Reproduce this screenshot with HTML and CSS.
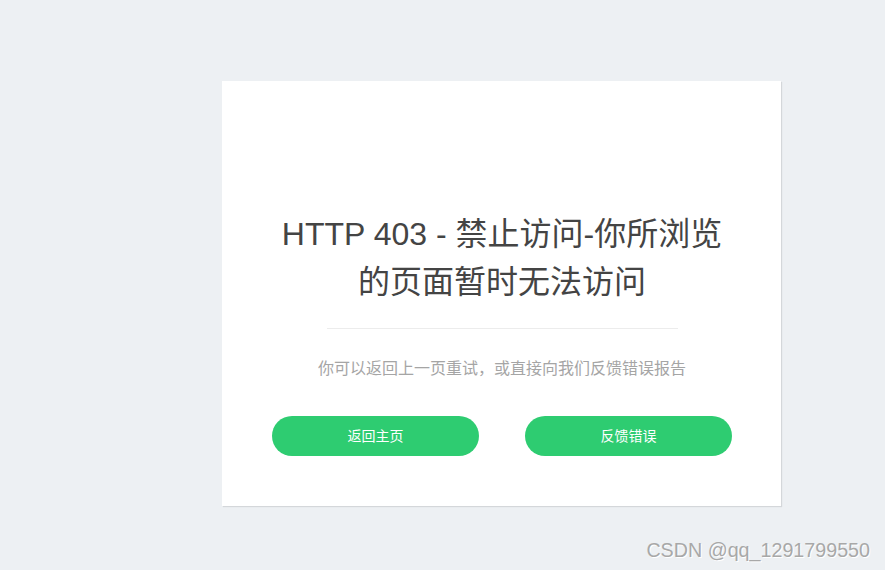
FILE: index.html
```html
<!DOCTYPE html>
<html lang="zh-CN">
<head>
<meta charset="utf-8">
<title>403</title>
<link rel="stylesheet" href="styles.css">
</head>
<body>
<div class="page">
  <div class="card">
    <h1 class="title">HTTP 403 - 禁止访问-你所浏览的页面暂时无法访问</h1>
    <div class="divider"></div>
    <p class="desc">你可以返回上一页重试，或直接向我们反馈错误报告</p>
    <div class="actions">
      <a class="btn" href="#">返回主页</a>
      <a class="btn" href="#">反馈错误</a>
    </div>
  </div>
</div>
<div class="watermark">CSDN @qq_1291799550</div>
</body>
</html>
```
FILE: styles.css
```css
html, body {
  margin: 0;
  padding: 0;
  height: 100%;
}
body {
  background: #edf0f3;
  font-family: "Liberation Sans", "Noto Sans CJK SC", sans-serif;
  overflow: hidden;
}
.page {
  padding: 81px 0 0 222px;
}
.card {
  width: 559px;
  box-sizing: border-box;
  background: #fff;
  box-shadow: 1px 1px 1px rgba(0, 0, 0, 0.1);
  padding: 129px 49px 50px 50px;
  display: flex;
  flex-direction: column;
  align-items: center;
}
.title {
  margin: 0;
  width: 460px;
  font-size: 32px;
  line-height: 48px;
  font-weight: normal;
  color: #444;
  text-align: center;
}
.divider {
  width: 351px;
  height: 1px;
  background: #ececec;
  margin: 22px 0 0 0;
}
.desc {
  margin: 30px 0 0 0;
  font-size: 16px;
  line-height: 20px;
  color: #a5a5a5;
}
.actions {
  margin-top: 37px;
  width: 100%;
  display: flex;
  justify-content: space-between;
}
.btn {
  width: 207px;
  height: 40px;
  line-height: 40px;
  border-radius: 20px;
  background: #2ecc71;
  color: #fff;
  font-size: 14px;
  text-align: center;
  text-decoration: none;
}
.watermark {
  position: absolute;
  right: 15px;
  bottom: 8px;
  font-size: 19.7px;
  color: #a8a8a8;
  text-shadow: 1px 1px 0 #fff;
}
```
